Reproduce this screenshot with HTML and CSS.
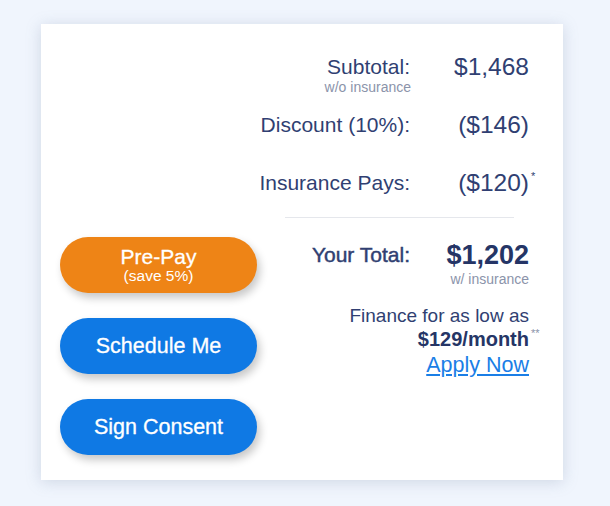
FILE: index.html
```html
<!DOCTYPE html>
<html lang="en">
<head>
<meta charset="utf-8">
<title>Quote summary</title>
<link rel="stylesheet" href="styles.css">
</head>
<body>
<main class="card">
  <section class="lines">
    <div class="row">
      <div class="label">Subtotal:<span class="note">w/o insurance</span></div>
      <div class="value">$1,468</div>
    </div>
    <div class="row">
      <div class="label">Discount (10%):</div>
      <div class="value">($146)</div>
    </div>
    <div class="row">
      <div class="label">Insurance Pays:</div>
      <div class="value">($120)<sup class="mark">*</sup></div>
    </div>
  </section>
  <hr class="divider">
  <section class="bottom">
    <div class="actions">
      <button class="btn btn-orange"><span class="btn-main">Pre-Pay</span><span class="btn-sub">(save 5%)</span></button>
      <button class="btn btn-blue"><span class="btn-main">Schedule Me</span></button>
      <button class="btn btn-blue"><span class="btn-main">Sign Consent</span></button>
    </div>
    <div class="summary">
      <div class="row total-row">
        <div class="label total-label">Your Total:</div>
        <div class="value total-value">$1,202<span class="note">w/ insurance</span></div>
      </div>
      <div class="finance">
        <div class="finance-text">Finance for as low as</div>
        <div class="finance-amount">$129/month<sup class="mark">**</sup></div>
        <a class="apply" href="#">Apply Now</a>
      </div>
    </div>
  </section>
</main>
</body>
</html>
```
FILE: styles.css
```css
* { box-sizing: border-box; }
html, body { margin: 0; padding: 0; }
body {
  background: #f0f5fd;
  font-family: "Liberation Sans", Arial, Helvetica, sans-serif;
  color: #303f72;
  width: 610px;
  height: 506px;
  overflow: hidden;
}
.card {
  margin: 24px 0 0 41px;
  width: 522px;
  height: 456px;
  background: #fff;
  box-shadow: 0 2px 14px rgba(120, 135, 165, 0.28);
  padding: 30px 34px 0 19px;
}
.lines { display: flex; flex-direction: column; }
.row {
  display: flex;
  justify-content: flex-end;
  align-items: flex-start;
  height: 58px;
}
.label {
  font-size: 21px;
  line-height: 26px;
  text-align: right;
  display: flex;
  flex-direction: column;
  align-items: flex-end;
}
.note {
  font-size: 14px;
  line-height: 14px;
  color: #8b93aa;
  margin-right: -1px;
}
.value {
  width: 119px;
  font-size: 24.5px;
  line-height: 26px;
  text-align: right;
  position: relative;
}
.mark {
  position: absolute;
  left: 100%;
  top: 1px;
  font-size: 11px;
  line-height: 11px;
  margin-left: 2px;
}
.lines .row:last-child { height: 26px; }
.divider {
  border: 0;
  height: 1px;
  background: #e5e7ec;
  margin: 21px 15px 0 225px;
}
.bottom {
  display: flex;
  justify-content: space-between;
}
.actions {
  display: flex;
  flex-direction: column;
  gap: 25px;
  padding-top: 19px;
}
.btn {
  width: 197px;
  height: 56px;
  border: 0;
  border-radius: 28px;
  color: #fff;
  font-family: inherit;
  display: flex;
  flex-direction: column;
  align-items: center;
  justify-content: center;
  box-shadow: 3px 5px 9px rgba(0, 0, 0, 0.22);
  padding: 0;
}
.btn-orange { background: #ee8416; }
.btn-blue { background: #0f79e4; }
.btn-main {
  font-size: 21.5px;
  line-height: 23px;
  -webkit-text-stroke: 0.3px #fff;
}
.btn-orange .btn-main { font-size: 21px; line-height: 22px; }
.btn-sub {
  font-size: 15.5px;
  line-height: 16px;
}
.summary {
  display: flex;
  flex-direction: column;
  align-items: flex-end;
  padding-top: 22px;
}
.total-row { height: auto; }
.total-label {
  font-size: 21px;
  line-height: 30px;
  -webkit-text-stroke: 0.45px #303f72;
}
.total-value {
  font-size: 27px;
  line-height: 30px;
  font-weight: bold;
  color: #253566;
  display: flex;
  flex-direction: column;
  align-items: flex-end;
}
.total-value .note {
  font-weight: normal;
  font-size: 14px;
  line-height: 18px;
  margin-right: 0;
}
.finance {
  display: flex;
  flex-direction: column;
  align-items: flex-end;
  margin-top: 17px;
}
.finance-text {
  font-size: 19px;
  line-height: 22px;
}
.finance-amount {
  font-size: 20px;
  line-height: 24px;
  font-weight: bold;
  color: #253566;
  position: relative;
}
.finance-amount .mark { top: 1px; font-weight: normal; color: #8b93aa; }
.apply {
  font-size: 21.5px;
  line-height: 28px;
  color: #1a7ee6;
  text-decoration: underline;
  text-underline-offset: 2px;
}
```
